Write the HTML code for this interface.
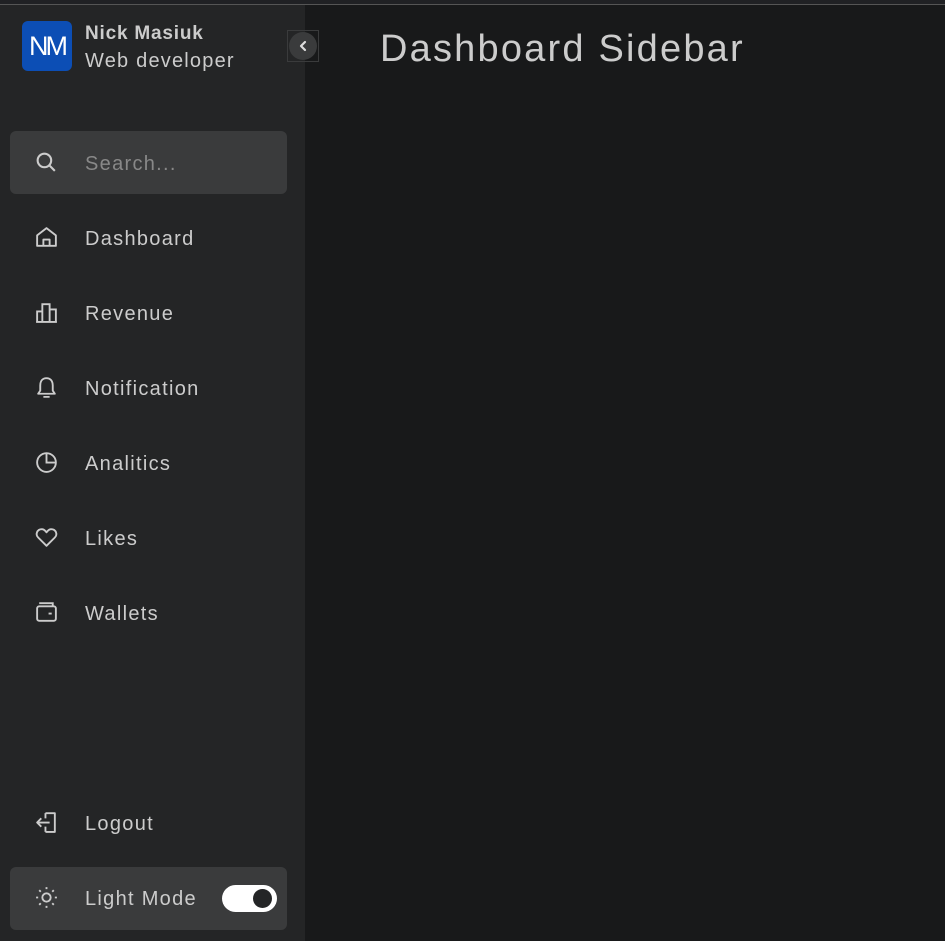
<!DOCTYPE html>
<html><head><meta charset="utf-8"><style>
*{margin:0;padding:0;box-sizing:border-box}
body{width:945px;height:941px;background:#18191a;font-family:"Liberation Sans",sans-serif;position:relative;overflow:hidden;color:#ccc}
.topline{position:absolute;left:0;top:0;width:945px;height:5px;background:#202124;border-bottom:1px solid #555}
.side{position:absolute;left:0;top:5px;width:305px;height:936px;background:#242526}
.logo{position:absolute;left:22px;top:21px;width:50px;height:50px;background:#0c4eb5;border-radius:6px;color:#fff;font-size:27px;display:flex;align-items:center;justify-content:center;letter-spacing:-3px}
.name{position:absolute;left:85px;top:23px;font-size:19px;font-weight:bold;color:#ccc;letter-spacing:0.8px}
.role{position:absolute;left:85px;top:50px;font-size:20px;color:#ccc;letter-spacing:1.2px}
.tog{position:absolute;left:287px;top:30px;width:32px;height:32px;border:1px solid #3a3b3c;}
.tog div{position:absolute;left:1px;top:1px;width:28px;height:28px;border-radius:50%;background:#3a3b3c;}
.search{position:absolute;left:10px;top:131px;width:277px;height:63px;background:#3a3b3c;border-radius:6px}
.item{position:absolute;left:0;width:305px;height:44px;font-size:20px;color:#ccc;letter-spacing:1.3px}
.item svg{position:absolute;left:34px;top:9px;width:25px;height:25px}
.item span{position:absolute;left:85px;top:12px}
h1{position:absolute;left:380px;top:28px;font-size:38px;font-weight:normal;color:#ccc;letter-spacing:2.2px}
.mode{position:absolute;left:10px;top:867px;width:277px;height:63px;background:#3a3b3c;border-radius:6px}
.sw{position:absolute;left:222px;top:885px;width:55px;height:27px;background:#fff;border-radius:14px}
.sw div{position:absolute;right:5px;top:4px;width:19px;height:19px;border-radius:50%;background:#242526}
</style></head><body>
<div class="topline"></div>
<div class="side"></div>
<div class="logo">NM</div>
<div class="name">Nick Masiuk</div>
<div class="role">Web developer</div>
<div class="tog"><div></div><svg style="position:absolute;left:8px;top:8px" width="14" height="14" viewBox="0 0 14 14"><path d="M9 3 L5 7 L9 11" stroke="#ddd" stroke-width="2.2" fill="none" stroke-linecap="round" stroke-linejoin="round"/></svg></div>
<div class="search"></div>
<div class="item" style="top:141px"><svg viewBox="0 0 24 24" fill="none" stroke="#ccc" stroke-width="2"><circle cx="10" cy="10" r="6.5"/><path d="M15 15l5 5"/></svg><span style="color:#888">Search...</span></div>
<div class="item" style="top:216px"><svg viewBox="0 0 24 24" fill="none" stroke="#ccc" stroke-width="1.8" stroke-linejoin="round"><path d="M3 10 L12 3 L21 10 V20 H3 Z M9 20 V14 H15 V20"/></svg><span>Dashboard</span></div>
<div class="item" style="top:291px"><svg viewBox="0 0 24 24" fill="none" stroke="#ccc" stroke-width="1.8"><path d="M2 21 H22 M3 21 V11 H8 V21 M8 21 V4 H15 V21 M15 21 V9 H21 V21"/></svg><span>Revenue</span></div>
<div class="item" style="top:366px"><svg viewBox="0 0 24 24" fill="none" stroke="#ccc" stroke-width="1.8" stroke-linejoin="round"><path d="M12 3 C8 3 6 6 6 10 V15 L4 18 H20 L18 15 V10 C18 6 16 3 12 3 Z M9 21 H15"/></svg><span>Notification</span></div>
<div class="item" style="top:441px"><svg viewBox="0 0 24 24" fill="none" stroke="#ccc" stroke-width="1.8"><circle cx="12" cy="12" r="9"/><path d="M12 3 V12 H21"/></svg><span>Analitics</span></div>
<div class="item" style="top:516px"><svg viewBox="0 0 24 24" fill="none" stroke="#ccc" stroke-width="1.8" stroke-linejoin="round"><path d="M12 20 L4 12 C1 9 3 4 7.5 4 C10 4 11 6 12 7 C13 6 14 4 16.5 4 C21 4 23 9 20 12 Z"/></svg><span>Likes</span></div>
<div class="item" style="top:591px"><svg viewBox="0 0 24 24" fill="none" stroke="#ccc" stroke-width="1.8"><rect x="3" y="6" width="18" height="14" rx="2"/><path d="M5 3 H18 V6 M14 13 H17"/></svg><span>Wallets</span></div>
<div class="item" style="top:801px"><svg viewBox="0 0 24 24" fill="none" stroke="#ccc" stroke-width="1.8" stroke-linejoin="round"><path d="M11 3 H20 V21 H11 M11 8 V3 M11 16 V21 M15 12 H3 M7 8 L3 12 L7 16"/></svg><span>Logout</span></div>
<div class="mode"></div>
<div class="item" style="top:876px"><svg viewBox="0 0 24 24" fill="none" stroke="#ccc" stroke-width="1.8"><circle cx="12" cy="12" r="4"/><path d="M12 2V4M12 20V22M2 12H4M20 12H22M5 5L6.5 6.5M17.5 17.5L19 19M5 19L6.5 17.5M17.5 6.5L19 5"/></svg><span>Light Mode</span></div>
<div class="sw"><div></div></div>
<h1>Dashboard Sidebar</h1>
</body></html>
